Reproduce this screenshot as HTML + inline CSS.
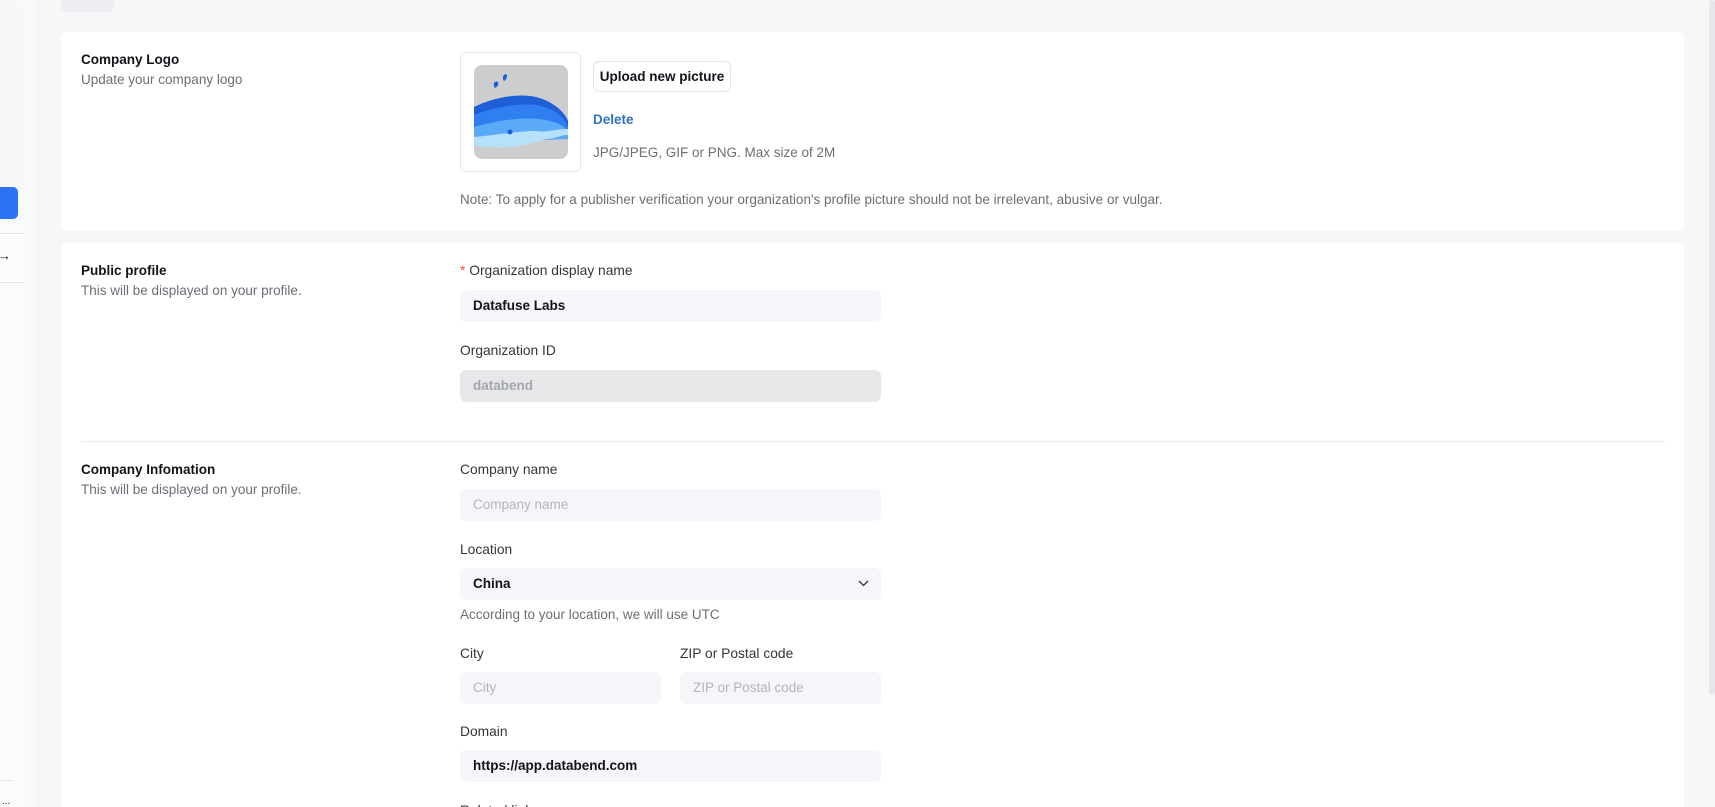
<!DOCTYPE html>
<html style="width:1715px;height:807px;overflow:hidden"><head><meta charset="utf-8"><style>
*{box-sizing:border-box;margin:0;padding:0}
body{width:1715px;height:807px;overflow:hidden;background:#f6f7f9;font-family:"Liberation Sans",sans-serif;position:relative;color:#1a1d23}
.abs{position:absolute}
.card{position:absolute;left:61px;width:1623px;background:#fff;border-radius:6px;overflow:hidden}
.t{position:absolute;font-size:13.5px;font-weight:bold;color:#111318}
.s{position:absolute;font-size:13.5px;color:#6b6f76}
.lbl{position:absolute;font-size:13.8px;color:#33363b}
.inp{position:absolute;height:32px;background:#f5f6f9;border-radius:6px;font-size:13.5px;padding:0 13px;line-height:32px}
.b{font-weight:bold;color:#111318}
.ph{color:#b2b5ba}
</style></head><body>
<div class="abs" style="left:0;top:0;width:36px;height:807px;background:#fafbfc"></div>
<div class="abs" style="left:0;top:0;width:24px;height:225px;background:#f7f8fa;border-radius:0 6px 6px 0"></div>
<div class="abs" style="left:24px;top:0;width:12px;height:807px;background:#f8f9fb"></div>
<div class="abs" style="left:0;top:187px;width:18px;height:32px;background:#2a74f4;border-radius:0 5px 5px 0"></div>
<div class="abs" style="left:0;top:233px;width:24px;height:1px;background:#e3e5e8"></div>
<div class="abs" style="left:-2px;top:248px;font-size:13px">→</div>
<div class="abs" style="left:0;top:282px;width:24px;height:1px;background:#e3e5e8"></div>
<div class="abs" style="left:0;top:780px;width:14px;height:1px;background:#e3e5e8"></div>
<div class="abs" style="left:2px;top:796px;font-size:10px">...</div>
<div class="abs" style="left:61px;top:-10px;width:53px;height:22px;background:#eceef1;border-radius:6px"></div>
<div class="abs" style="left:1709px;top:0;width:6px;height:695px;background:#e6e7ea;border-radius:3px"></div>

<div class="card" style="top:32px;height:199px">
  <div class="t" style="left:20px;top:20px">Company Logo</div>
  <div class="s" style="left:20px;top:40px">Update your company logo</div>
  <div class="abs" style="left:399px;top:20px;width:121px;height:120px;border:1px solid #e6e8eb;border-radius:6px"></div>
  <div class="abs" style="left:413px;top:33px;width:94px;height:94px;background:#cdcdcd;border-radius:8px;overflow:hidden">
    <svg width="94" height="94" viewBox="0 0 94 94">
      <path d="M0 42 C20 32 45 28 62 32 C78 36 90 46 94 56 L94 70 L0 70Z" fill="#1f5fd6"/>
      <path d="M0 50 C20 42 45 38 62 40 C80 43 90 52 94 62 L94 72 L0 72Z" fill="#2f7ff0"/>
      <path d="M0 62 C22 56 45 52 65 54 C80 56 90 60 94 66 L94 74 L0 78Z" fill="#5aaaf7"/>
      <path d="M0 72 C22 70 45 66 62 66 C72 68 80 64 94 64 L94 70 C86 70 80 74 72 74 C55 80 30 86 0 80Z" fill="#b7e0fb"/>
      <circle cx="36" cy="67" r="2.5" fill="#1f5fd6"/>
      <path d="M21 23 C18 19 21 15 24 17 C25 20 23 22 21 23Z M30 16 C27 12 31 7 33 10 C33 13 32 15 30 16Z" fill="#1f5fd6"/>
    </svg>
  </div>
  <div class="abs" style="left:532px;top:29px;width:138px;height:31px;border:1px solid #e3e5e8;border-radius:6px;font-size:13.5px;font-weight:bold;line-height:29px;text-align:center;color:#111318">Upload new picture</div>
  <div class="abs" style="left:532px;top:80px;font-size:13.5px;font-weight:bold;color:#2f72c6">Delete</div>
  <div class="s" style="left:532px;top:113px">JPG/JPEG, GIF or PNG. Max size of 2M</div>
  <div class="s" style="left:399px;top:160px">Note: To apply for a publisher verification your organization's profile picture should not be irrelevant, abusive or vulgar.</div>
</div>

<div class="card" style="top:243px;height:564px;border-radius:6px 6px 0 0">
  <div class="t" style="left:20px;top:20px">Public profile</div>
  <div class="s" style="left:20px;top:40px">This will be displayed on your profile.</div>
  <div class="lbl" style="left:399px;top:20px"><span style="color:#e8553f">*</span> Organization display name</div>
  <div class="inp b" style="left:399px;top:47px;width:421px">Datafuse Labs</div>
  <div class="lbl" style="left:399px;top:100px">Organization ID</div>
  <div class="inp" style="left:399px;top:127px;width:421px;background:#e6e7e9;color:#a4a7ac;font-weight:bold">databend</div>
  <div class="abs" style="left:20px;top:198px;width:1584px;height:1px;background:#e8eaed"></div>
  <div class="t" style="left:20px;top:219px">Company Infomation</div>
  <div class="s" style="left:20px;top:239px">This will be displayed on your profile.</div>
  <div class="lbl" style="left:399px;top:219px">Company name</div>
  <div class="inp ph" style="left:399px;top:246px;width:421px">Company name</div>
  <div class="lbl" style="left:399px;top:299px">Location</div>
  <div class="inp b" style="left:399px;top:325px;width:421px">China<svg style="position:absolute;right:12px;top:12px" width="11" height="7" viewBox="0 0 11 7"><path d="M1 1 L5.5 5.5 L10 1" stroke="#333" stroke-width="1.3" fill="none"/></svg></div>
  <div class="s" style="left:399px;top:364px">According to your location, we will use UTC</div>
  <div class="lbl" style="left:399px;top:403px">City</div>
  <div class="lbl" style="left:619px;top:403px">ZIP or Postal code</div>
  <div class="inp ph" style="left:399px;top:429px;width:201px">City</div>
  <div class="inp ph" style="left:619px;top:429px;width:201px">ZIP or Postal code</div>
  <div class="lbl" style="left:399px;top:481px">Domain</div>
  <div class="inp b" style="left:399px;top:507px;width:421px">https://app.databend.com</div>
  <div class="lbl" style="left:399px;top:560px">Related links</div>
</div>
</body></html>
